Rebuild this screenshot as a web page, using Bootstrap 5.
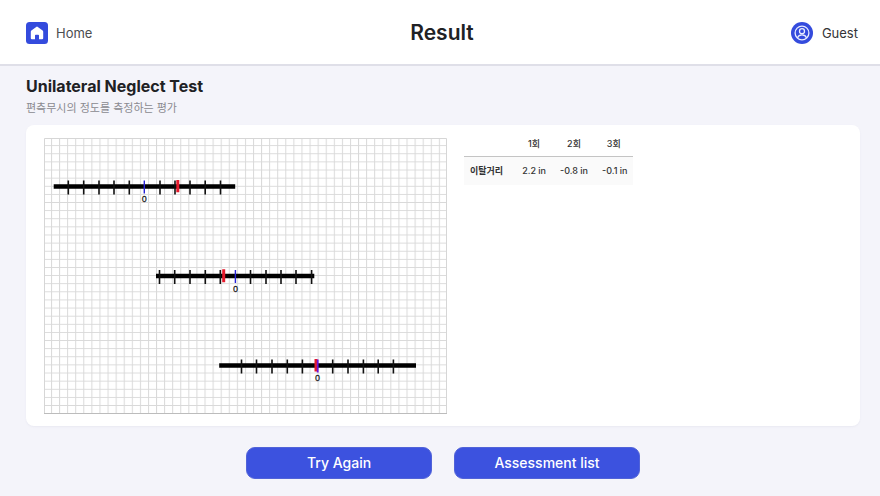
<!DOCTYPE html>
<html lang="ko">
<head>
<meta charset="utf-8">
<meta name="viewport" content="width=device-width, initial-scale=1">
<title>Unilateral Neglect Test – Result</title>
<link href="https://cdn.jsdelivr.net/npm/bootstrap@5.3.0/dist/css/bootstrap.min.css" rel="stylesheet">
<style>
body { background: #f4f4fa; color: #202124; font-family: Inter, "Noto Sans CJK KR", sans-serif; font-size: 13px; line-height: 20px; }
.topbar { height: 66px; padding: 2px 22px 0 26px; border-bottom: 2px solid #dfdfe8; }
.topbar a { color: #4c4d50; gap: 8px; }
.topbar a.user { color: #333437; gap: 9px; }
.page-title { font-size: 21px; line-height: 28px; font-weight: 600; }
.page-body { padding: 10px 20px 17px 26px; }
.test-title { font-size: 16px; line-height: 20px; font-weight: 700; }
.test-note { font-size: 11px; line-height: 16px; color: #8a8a90; margin: 4px 0 9px; }
.result-panel { border-radius: 8px; padding: 13px 18px 12px; box-shadow: 0 1px 2px #e9e9f2; }
.chart { flex: 0 1 403px; min-width: 0; }
.scores { font-size: 9px; line-height: 12px; margin: -8px 0 0 17px; }
.scores th, .scores td { padding: 8px 7px; white-space: nowrap; text-align: center; border: 0; color: #333; }
.scores thead th { font-weight: 500; padding-bottom: 6px; border-bottom: 1px solid #c4c4c4; }
.scores tbody th { font-weight: 700; padding: 8px 12px 8px 6px; }
.scores tbody td { font-weight: 500; }
.scores tbody td:last-child { padding-right: 5px; }
.scores tbody th, .scores tbody td { background: #fafafa; }
.actions { margin-top: 21px; gap: 22px; }
.action { width: 186px; height: 32px; padding: 0; border-radius: 9px; font-size: 14px; line-height: 20px; font-weight: 500; color: #fff; background: #3c52df; border: 1px solid #5163d8; }
.action:hover { color: #fff; background: #3044c8; }
</style>
<script src="https://cdn.jsdelivr.net/npm/bootstrap@5.3.0/dist/js/bootstrap.bundle.min.js"></script>
</head>
<body>
<header class="topbar bg-white d-flex align-items-center">
  <div class="col d-flex">
    <a href="#" class="d-flex align-items-center text-decoration-none">
      <svg width="22" height="22" viewBox="0 0 22 22" aria-hidden="true"><rect width="22" height="22" rx="3.5" fill="#344bdd"/><path d="M4.8 9.7Q4.8 9 5.4 8.5L10.2 4.9Q11 4.3 11.8 4.9L16.6 8.5Q17.2 9 17.2 9.7V16.2Q17.2 17.3 16.1 17.3H13V13.6Q13 12.8 12.2 12.8H9.8Q9 12.8 9 13.6V17.3H5.9Q4.8 17.3 4.8 16.2Z" fill="#fff"/></svg>
      <span>Home</span>
    </a>
  </div>
  <h1 class="page-title mb-0">Result</h1>
  <div class="col d-flex justify-content-end">
    <a href="#" class="user d-flex align-items-center text-decoration-none">
      <svg width="22" height="22" viewBox="0 0 22 22" fill="none" aria-hidden="true"><circle cx="11" cy="11" r="11" fill="#344bdd"/><g stroke="#e9edff" stroke-width="1.3"><circle cx="11" cy="11" r="6.9"/><circle cx="11" cy="9.2" r="2.5"/><path d="M6.4 15.9C7.3 13.6 8.7 12.9 11 12.9S14.7 13.6 15.6 15.9"/></g></svg>
      <span>Guest</span>
    </a>
  </div>
</header>
<main class="page-body">
  <h2 class="test-title mb-0">Unilateral Neglect Test</h2>
  <p class="test-note">편측무시의 정도를 측정하는 평가</p>
  <section class="result-panel bg-white d-flex align-items-start">
    <div class="chart">
      <svg class="d-block w-100" viewBox="44 138 403 276" role="img" aria-label="Line bisection results">
        <defs>
          <pattern id="squares" x="51" y="145.2" width="8.08" height="8.12" patternUnits="userSpaceOnUse"><path d="M0 .5H8.08M.5 0V8.12" stroke="#d9d9d9" fill="none"/></pattern>
        </defs>
        <rect x="44" y="138" width="403" height="276" fill="url(#squares)"/>
        <path d="M44.5 414V138.5H446.5V414" stroke="#d6d6d6" fill="none"/>
        <path d="M44 413.5H447" stroke="#bcbcbc"/>
        <g stroke="#000" stroke-width="4.4"><path d="M53.7 186.5H235.2M156 276H314.3M219.2 365.5H416"/></g>
        <g stroke="#111" stroke-width="1.6">
          <path d="M68.3 180.5v14M83.7 180.5v14M99 180.5v14M114 180.5v14M129.3 180.5v14M160 180.5v14M175 180.5v14M190 180.5v14M205.2 180.5v14M220.5 180.5v14"/>
          <path d="M159.5 270v14M174.7 270v14M190 270v14M205.3 270v14M220.3 270v14M250.5 270v14M266 270v14M281 270v14M296 270v14M311.6 270v14"/>
          <path d="M241.5 359.5v14M256.5 359.5v14M272 359.5v14M287.3 359.5v14M302.4 359.5v14M332.7 359.5v14M348 359.5v14M363.4 359.5v14M378.2 359.5v14M393.4 359.5v14"/>
        </g>
        <path d="M177.8 180V192.3M223.7 269.3V282.3M316 359V371.5" stroke="#e5192b" stroke-width="3"/>
        <path d="M144.3 180.5v13M235.4 270v13" stroke="#2721d8" stroke-width="1.4"/>
        <path d="M317.7 359.5v13" stroke="#6c12d8" stroke-width="1.8"/>
        <g font-size="8" fill="#222" stroke="#222" stroke-width=".3" text-anchor="middle"><text x="144.3" y="202">0</text><text x="235.4" y="291.5">0</text><text x="317.5" y="381">0</text></g>
      </svg>
    </div>
    <table class="scores">
      <thead><tr><th></th><th scope="col">1회</th><th scope="col">2회</th><th scope="col">3회</th></tr></thead>
      <tbody><tr><th scope="row">이탈거리</th><td>2.2 in</td><td>-0.8 in</td><td>-0.1 in</td></tr></tbody>
    </table>
  </section>
  <div class="actions d-flex justify-content-center">
    <button type="button" class="btn action">Try Again</button>
    <button type="button" class="btn action">Assessment list</button>
  </div>
</main>
</body>
</html>
